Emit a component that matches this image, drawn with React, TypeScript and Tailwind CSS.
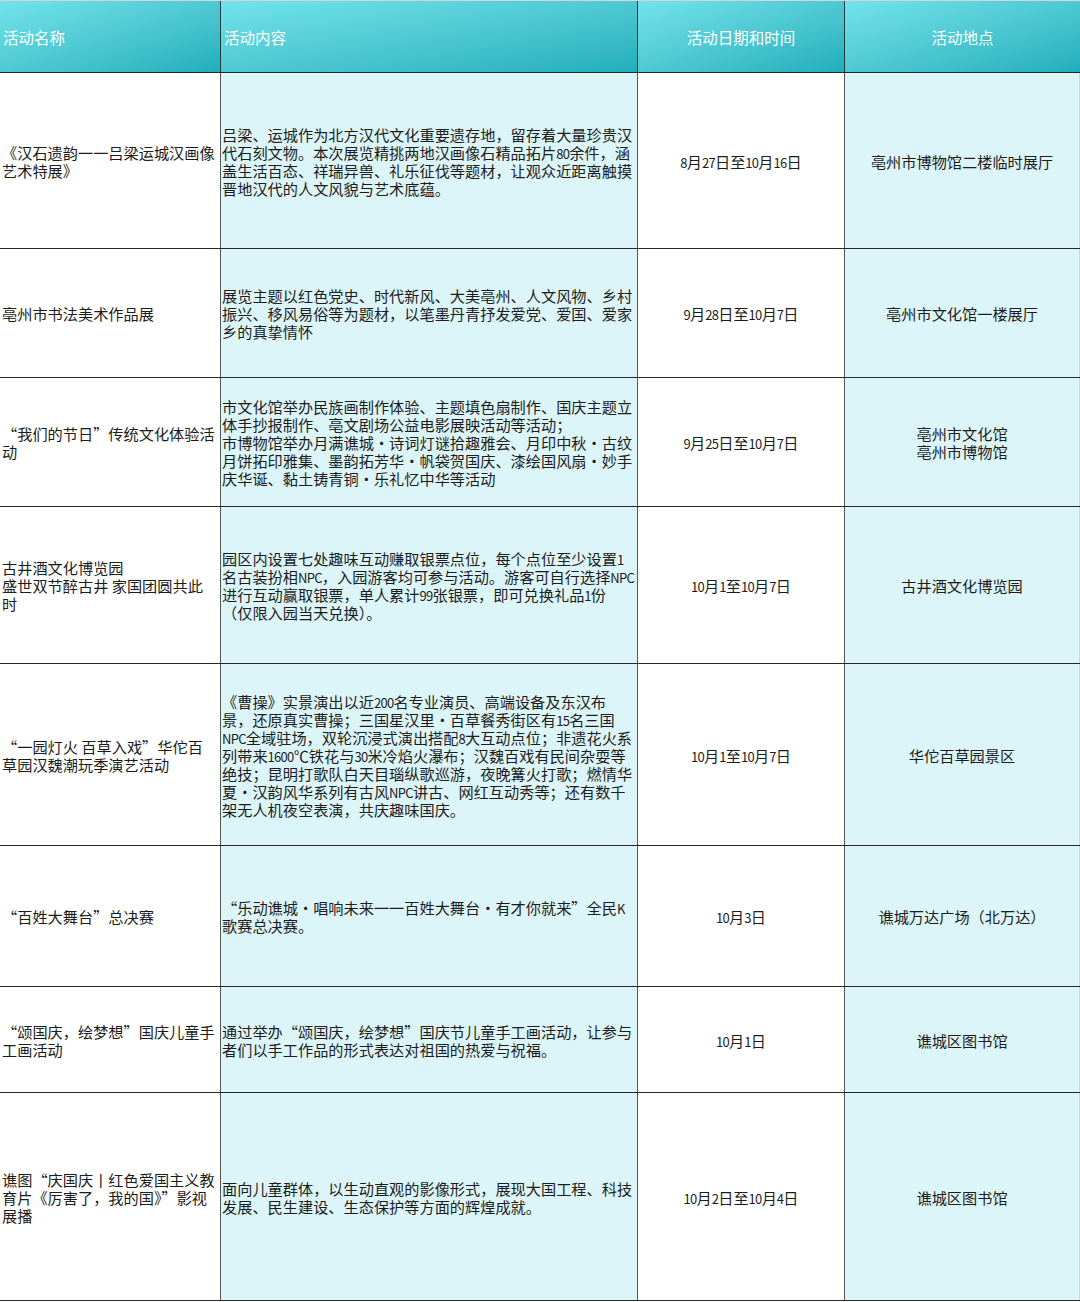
import React from "react";

type Row = {
  h: string;
  name: string[];
  content: string[];
  date: string;
  place: string[];
};

const rows: Row[] = [
  {
    h: "h-[176px]",
    name: ["《汉石遗韵一一吕梁运城汉画像", "艺术特展》"],
    content: [
      "吕梁、运城作为北方汉代文化重要遗存地，留存着大量珍贵汉",
      "代石刻文物。本次展览精挑两地汉画像石精品拓片80余件，涵",
      "盖生活百态、祥瑞异兽、礼乐征伐等题材，让观众近距离触摸",
      "晋地汉代的人文风貌与艺术底蕴。",
    ],
    date: "8月27日至10月16日",
    place: ["亳州市博物馆二楼临时展厅"],
  },
  {
    h: "h-[129px]",
    name: ["亳州市书法美术作品展"],
    content: [
      "展览主题以红色党史、时代新风、大美亳州、人文风物、乡村",
      "振兴、移风易俗等为题材，以笔墨丹青抒发爱党、爱国、爱家",
      "乡的真挚情怀",
    ],
    date: "9月28日至10月7日",
    place: ["亳州市文化馆一楼展厅"],
  },
  {
    h: "h-[129px]",
    name: ["“我们的节日”传统文化体验活", "动"],
    content: [
      "市文化馆举办民族画制作体验、主题填色扇制作、国庆主题立",
      "体手抄报制作、亳文剧场公益电影展映活动等活动；",
      "市博物馆举办月满谯城·诗词灯谜拾趣雅会、月印中秋·古纹",
      "月饼拓印雅集、墨韵拓芳华·帆袋贺国庆、漆绘国风扇·妙手",
      "庆华诞、黏土铸青铜·乐礼忆中华等活动",
    ],
    date: "9月25日至10月7日",
    place: ["亳州市文化馆", "亳州市博物馆"],
  },
  {
    h: "h-[157px]",
    name: ["古井酒文化博览园", "盛世双节醉古井 家国团圆共此", "时"],
    content: [
      "园区内设置七处趣味互动赚取银票点位，每个点位至少设置1",
      "名古装扮相NPC，入园游客均可参与活动。游客可自行选择NPC",
      "进行互动赢取银票，单人累计99张银票，即可兑换礼品1份",
      "（仅限入园当天兑换）。",
    ],
    date: "10月1至10月7日",
    place: ["古井酒文化博览园"],
  },
  {
    h: "h-[182px]",
    name: ["“一园灯火 百草入戏”华佗百", "草园汉魏潮玩季演艺活动"],
    content: [
      "《曹操》实景演出以近200名专业演员、高端设备及东汉布",
      "景，还原真实曹操；三国星汉里·百草餐秀街区有15名三国",
      "NPC全域驻场，双轮沉浸式演出搭配8大互动点位；非遗花火系",
      "列带来1600℃铁花与30米冷焰火瀑布；汉魏百戏有民间杂耍等",
      "绝技；昆明打歌队白天目瑙纵歌巡游，夜晚篝火打歌；燃情华",
      "夏·汉韵风华系列有古风NPC讲古、网红互动秀等；还有数千",
      "架无人机夜空表演，共庆趣味国庆。",
    ],
    date: "10月1至10月7日",
    place: ["华佗百草园景区"],
  },
  {
    h: "h-[141px]",
    name: ["“百姓大舞台”总决赛"],
    content: [
      "“乐动谯城·唱响未来一一百姓大舞台·有才你就来”全民K",
      "歌赛总决赛。",
    ],
    date: "10月3日",
    place: ["谯城万达广场（北万达）"],
  },
  {
    h: "h-[106px]",
    name: ["“颂国庆，绘梦想”国庆儿童手", "工画活动"],
    content: [
      "通过举办“颂国庆，绘梦想”国庆节儿童手工画活动，让参与",
      "者们以手工作品的形式表达对祖国的热爱与祝福。",
    ],
    date: "10月1日",
    place: ["谯城区图书馆"],
  },
  {
    h: "h-[208px]",
    name: ["谯图“庆国庆丨红色爱国主义教", "育片《厉害了，我的国》”影视", "展播"],
    content: [
      "面向儿童群体，以生动直观的影像形式，展现大国工程、科技",
      "发展、民生建设、生态保护等方面的辉煌成就。",
    ],
    date: "10月2日至10月4日",
    place: ["谯城区图书馆"],
  },
];

// latin letters and digits are half width in the source font, so narrow them
function Narrow({ text }: { text: string }) {
  const parts = text.split(/([A-Za-z0-9]+)/);
  return (
    <>
      {parts.map((p, i) =>
        /^[A-Za-z0-9]+$/.test(p) ? (
          <span key={i} className="text-[13px] leading-[0] tracking-[-0.7px]">
            {p}
          </span>
        ) : (
          <React.Fragment key={i}>{p}</React.Fragment>
        )
      )}
    </>
  );
}

function Lines({ lines }: { lines: string[] }) {
  return (
    <>
      {lines.map((l, i) => (
        <div key={i} className="h-[18px] whitespace-nowrap">
          <Narrow text={l} />
        </div>
      ))}
    </>
  );
}

const headCell =
  "flex items-center h-full bg-gradient-to-br from-[#72e3ea] to-[#1eafbc] text-white text-[15.5px] border-r border-[#1f3a3d]";

export default function App() {
  return (
    <div
      lang="zh-CN"
      className="w-[1080px] h-[1302px] bg-white overflow-hidden border-t border-[#cfd8d9] text-[#1c1c1c] text-[15.2px] leading-[18px] font-['Noto_Sans_CJK_SC','Liberation_Sans',sans-serif]"
    >
      {/* header */}
      <div className="grid grid-cols-[221px_417px_207px_235px] h-[72px] border-b border-[#1c2a2b]">
        <div className={headCell + " pl-[3px]"}>活动名称</div>
        <div className={headCell + " pl-[3px]"}>活动内容</div>
        <div className={headCell + " justify-center"}>活动日期和时间</div>
        <div className={headCell + " justify-center border-r-0"}>活动地点</div>
      </div>

      {/* body rows */}
      {rows.map((r, i) => (
        <div
          key={i}
          className={
            "grid grid-cols-[221px_417px_207px_235px] border-b border-[#262626] " +
            r.h
          }
        >
          <div className="flex flex-col justify-center pl-[2px] border-r border-[#555] overflow-hidden">
            <Lines lines={r.name} />
          </div>
          <div className="flex flex-col justify-center pl-[1px] bg-[#dcf5f8] border-r border-[#555] overflow-hidden">
            <Lines lines={r.content} />
          </div>
          <div className="flex flex-col justify-center items-center border-r border-[#555]">
            <Lines lines={[r.date]} />
          </div>
          <div className="flex flex-col justify-center items-center bg-[#dcf5f8] border-r border-[#cfd8d9]">
            <Lines lines={r.place} />
          </div>
        </div>
      ))}
    </div>
  );
}
